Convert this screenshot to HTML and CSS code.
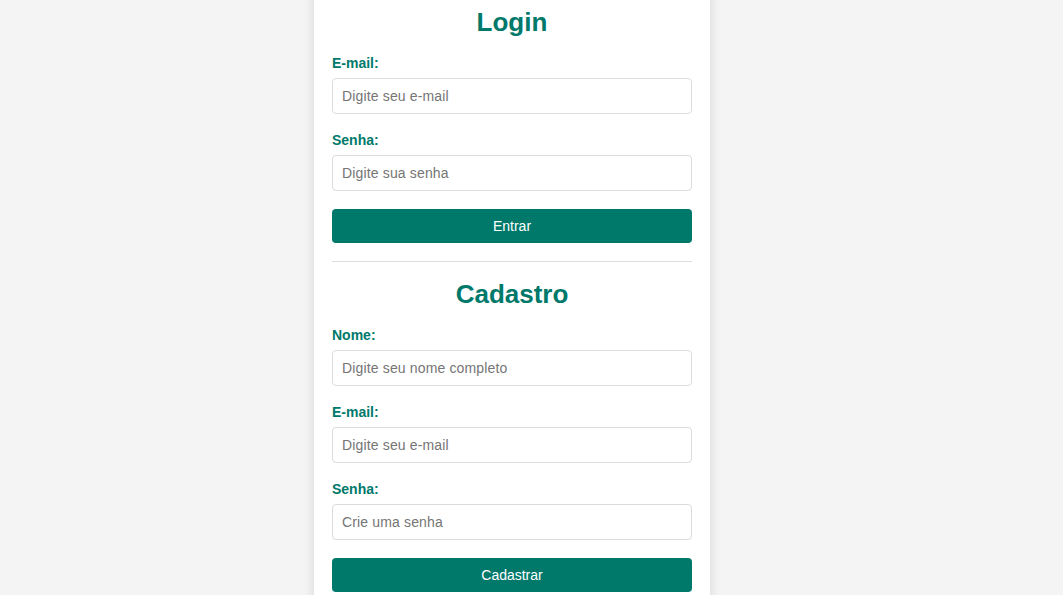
FILE: index.html
```html
<!DOCTYPE html>
<html lang="pt-BR">
<head>
<meta charset="utf-8">
<title>Login e Cadastro</title>
<link rel="stylesheet" href="styles.css">
</head>
<body>
  <div class="card">
    <section class="section">
      <h2 class="title">Login</h2>
      <form class="form">
        <div class="group">
          <label class="label" for="login-email">E-mail:</label>
          <input class="input" id="login-email" type="email" placeholder="Digite seu e-mail">
        </div>
        <div class="group">
          <label class="label" for="login-senha">Senha:</label>
          <input class="input" id="login-senha" type="password" placeholder="Digite sua senha">
        </div>
        <button class="button" type="button">Entrar</button>
      </form>
    </section>
    <div class="divider"></div>
    <section class="section">
      <h2 class="title">Cadastro</h2>
      <form class="form">
        <div class="group">
          <label class="label" for="cad-nome">Nome:</label>
          <input class="input" id="cad-nome" type="text" placeholder="Digite seu nome completo">
        </div>
        <div class="group">
          <label class="label" for="cad-email">E-mail:</label>
          <input class="input" id="cad-email" type="email" placeholder="Digite seu e-mail">
        </div>
        <div class="group">
          <label class="label" for="cad-senha">Senha:</label>
          <input class="input" id="cad-senha" type="password" placeholder="Crie uma senha">
        </div>
        <button class="button" type="button">Cadastrar</button>
      </form>
    </section>
  </div>
</body>
</html>
```
FILE: styles.css
```css
* {
  box-sizing: border-box;
}

html, body {
  margin: 0;
  padding: 0;
}

html {
  background: #f4f4f4;
  overflow: hidden;
}

body {
  max-width: 1024px;
  height: 100vh;
  overflow: hidden;
  background: #f4f4f4;
  font-family: "Liberation Sans", Arial, sans-serif;
  font-size: 14px;
  display: flex;
  justify-content: center;
  align-items: center;
}

.card {
  width: 396px;
  flex-shrink: 0;
  background: #ffffff;
  padding: 18px;
  border-radius: 8px;
  box-shadow: 0 0 12px rgba(0, 0, 0, 0.12);
  display: flex;
  flex-direction: column;
}

.section {
  display: flex;
  flex-direction: column;
}

.section:first-child {
  padding-top: 4px;
}

.title {
  margin: 0 0 18px;
  font-size: 26px;
  line-height: 30px;
  font-weight: bold;
  color: #00796b;
  text-align: center;
}

.form {
  display: flex;
  flex-direction: column;
  gap: 18px;
  margin: 0;
}

.group {
  display: flex;
  flex-direction: column;
  gap: 7px;
}

.label {
  font-size: 14px;
  line-height: 16px;
  font-weight: bold;
  color: #00796b;
}

.input {
  width: 100%;
  padding: 9px 9px;
  border: 1px solid #dcdcdc;
  border-radius: 4px;
  font-family: "Liberation Sans", Arial, sans-serif;
  font-size: 14px;
  line-height: 16px;
  letter-spacing: 0.15px;
  color: #333;
  background: #fff;
  outline: none;
}

.input::placeholder {
  color: #757575;
}

.button {
  width: 100%;
  padding: 9px;
  border: none;
  border-radius: 4px;
  background: #00796b;
  color: #ffffff;
  font-family: "Liberation Sans", Arial, sans-serif;
  font-size: 14px;
  line-height: 16px;
  cursor: pointer;
}

.divider {
  height: 1px;
  margin: 18px 0 17px;
  background: #dddddd;
}
```
